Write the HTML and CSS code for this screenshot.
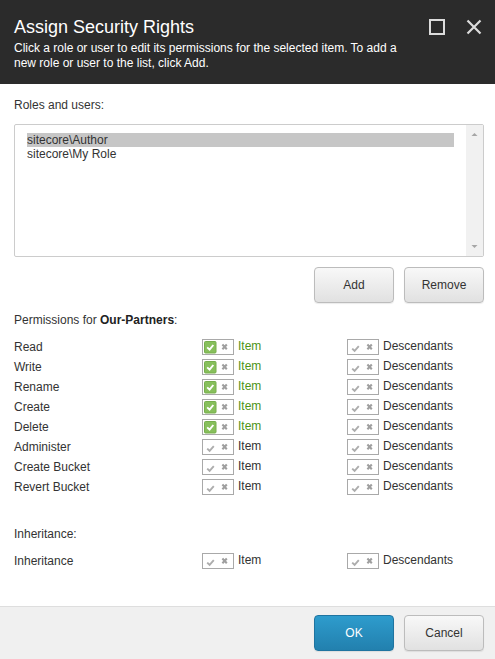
FILE: index.html
```html
<!DOCTYPE html>
<html lang="en">
<head>
<meta charset="utf-8">
<title>Assign Security Rights</title>
<link rel="stylesheet" href="styles.css">
</head>
<body>
<div class="dialog">
  <header class="header">
    <div class="head-text">
      <h1 class="title">Assign Security Rights</h1>
      <p class="subtitle">Click a role or user to edit its permissions for the selected item. To add a new role or user to the list, click Add.</p>
    </div>
    <div class="win-actions">
      <svg class="win-icon" width="16" height="16" viewBox="0 0 16 16"><rect x="1" y="1" width="14" height="14" fill="none" stroke="#dcdcdc" stroke-width="2"/></svg>
      <svg class="win-icon" width="16" height="16" viewBox="0 0 16 16"><path d="M1.5 1.5 L14.5 14.5 M14.5 1.5 L1.5 14.5" stroke="#dcdcdc" stroke-width="2.2" fill="none"/></svg>
    </div>
  </header>

  <main class="content">
    <div class="section-label roles-label">Roles and users:</div>
    <div class="listbox">
      <ul class="list-items">
        <li class="selected">sitecore\Author</li>
        <li>sitecore\My Role</li>
      </ul>
      <div class="scrollbar">
        <svg width="17" height="17" viewBox="0 0 17 17"><path d="M5.5 10 L8.5 7 L11.5 10 Z" fill="#a6a6a6"/></svg>
        <svg width="17" height="17" viewBox="0 0 17 17"><path d="M5.5 7 L8.5 10 L11.5 7 Z" fill="#a6a6a6"/></svg>
      </div>
    </div>
    <div class="list-actions">
      <button class="btn">Add</button>
      <button class="btn">Remove</button>
    </div>

    <div class="section-label perm-label">Permissions for <b>Our-Partners</b>:</div>
    <div class="perm-grid">
      <div class="perm-name">Read</div>
      <div class="cell"><span class="tri tri-on"></span><span class="lbl lbl-on">Item</span></div>
      <div class="cell"><span class="tri"></span><span class="lbl">Descendants</span></div>

      <div class="perm-name">Write</div>
      <div class="cell"><span class="tri tri-on"></span><span class="lbl lbl-on">Item</span></div>
      <div class="cell"><span class="tri"></span><span class="lbl">Descendants</span></div>

      <div class="perm-name">Rename</div>
      <div class="cell"><span class="tri tri-on"></span><span class="lbl lbl-on">Item</span></div>
      <div class="cell"><span class="tri"></span><span class="lbl">Descendants</span></div>

      <div class="perm-name">Create</div>
      <div class="cell"><span class="tri tri-on"></span><span class="lbl lbl-on">Item</span></div>
      <div class="cell"><span class="tri"></span><span class="lbl">Descendants</span></div>

      <div class="perm-name">Delete</div>
      <div class="cell"><span class="tri tri-on"></span><span class="lbl lbl-on">Item</span></div>
      <div class="cell"><span class="tri"></span><span class="lbl">Descendants</span></div>

      <div class="perm-name">Administer</div>
      <div class="cell"><span class="tri"></span><span class="lbl">Item</span></div>
      <div class="cell"><span class="tri"></span><span class="lbl">Descendants</span></div>

      <div class="perm-name">Create Bucket</div>
      <div class="cell"><span class="tri"></span><span class="lbl">Item</span></div>
      <div class="cell"><span class="tri"></span><span class="lbl">Descendants</span></div>

      <div class="perm-name">Revert Bucket</div>
      <div class="cell"><span class="tri"></span><span class="lbl">Item</span></div>
      <div class="cell"><span class="tri"></span><span class="lbl">Descendants</span></div>
    </div>

    <div class="section-label inherit-label">Inheritance:</div>
    <div class="perm-grid">
      <div class="perm-name">Inheritance</div>
      <div class="cell"><span class="tri"></span><span class="lbl">Item</span></div>
      <div class="cell"><span class="tri"></span><span class="lbl">Descendants</span></div>
    </div>
  </main>

  <footer class="footer">
    <button class="btn btn-primary">OK</button>
    <button class="btn">Cancel</button>
  </footer>
</div>
</body>
</html>
```
FILE: styles.css
```css
* { box-sizing: border-box; }

html, body {
  margin: 0;
  padding: 0;
  background: #ffffff;
}

body {
  font-family: "Liberation Sans", Arial, sans-serif;
  font-size: 12px;
  color: #333333;
}

.dialog {
  width: 495px;
  height: 659px;
  display: flex;
  flex-direction: column;
  overflow: hidden;
}

/* Header */
.header {
  height: 84px;
  flex: 0 0 84px;
  background: #2b2b2b;
  color: #ffffff;
  display: flex;
  justify-content: space-between;
  align-items: flex-start;
  padding: 17px 13px 0 14px;
}

.title {
  margin: 0;
  font-size: 18px;
  font-weight: normal;
  line-height: 21px;
}

.subtitle {
  margin: 3px 0 0 0;
  font-size: 12px;
  line-height: 15px;
  max-width: 400px;
}

.win-actions {
  display: flex;
  gap: 21px;
  margin-top: 2px;
}

.win-icon { display: block; }

/* Content */
.content {
  flex: 1 1 auto;
  padding: 0 11px 0 14px;
}

.section-label {
  line-height: 14px;
  color: #333333;
}

.section-label b { color: #222222; }

.roles-label { margin-top: 14px; }

.listbox {
  margin-top: 12px;
  height: 133px;
  border: 1px solid #cccccc;
  border-radius: 2px;
  display: flex;
}

.list-items {
  flex: 1 1 auto;
  list-style: none;
  margin: 0;
  padding: 8px 12px 0 12px;
}

.list-items li {
  line-height: 14px;
  height: 14px;
  color: #333333;
}

.list-items li.selected {
  background: #c6c6c6;
}

.scrollbar {
  width: 17px;
  flex: 0 0 17px;
  background: #f1f1f1;
  display: flex;
  flex-direction: column;
  justify-content: space-between;
  padding: 1px 0;
}

.scrollbar svg { display: block; }

.list-actions {
  margin-top: 10px;
  display: flex;
  justify-content: flex-end;
  gap: 10px;
}

/* Buttons */
.btn {
  width: 80px;
  height: 36px;
  font-family: "Liberation Sans", Arial, sans-serif;
  font-size: 12px;
  color: #333333;
  background: linear-gradient(#f8f8f8, #e1e1e1);
  border: 1px solid #bcbcbc;
  border-radius: 4px;
  padding: 0;
  box-shadow: 0 1px 1px rgba(0,0,0,0.08);
}

.btn-primary {
  color: #ffffff;
  background: linear-gradient(#2e9ccd, #2280ae);
  border-color: #1f74a0;
}

/* Permissions */
.perm-label { margin-top: 10px; }

.perm-grid {
  margin-top: 10px;
  display: grid;
  grid-template-columns: 188px 145px 1fr;
  grid-auto-rows: 20px;
  align-items: center;
}

.perm-name {
  line-height: 14px;
}

.cell {
  display: flex;
  align-items: center;
  gap: 4px;
  height: 20px;
}

.lbl {
  line-height: 14px;
  color: #333333;
  margin-top: -2px;
}

.lbl-on { color: #4d9417; }

.tri {
  display: block;
  width: 32px;
  height: 16px;
  border: 1px solid #a9a9a9;
  background-color: #ffffff;
  background-repeat: no-repeat;
  background-position: 0 0;
  background-image: url("data:image/svg+xml,%3Csvg xmlns='http://www.w3.org/2000/svg' width='30' height='14' viewBox='0 0 30 14'%3E%3Cpath d='M4.2 8.6 L6.6 10.8 L10.8 6.2' fill='none' stroke='%23adadad' stroke-width='1.9'/%3E%3Cpath d='M19.4 4.6 L23.8 9.2 M23.8 4.6 L19.4 9.2' fill='none' stroke='%239f9f9f' stroke-width='2.1'/%3E%3C/svg%3E");
}

.tri-on {
  background-image: url("data:image/svg+xml,%3Csvg xmlns='http://www.w3.org/2000/svg' width='30' height='14' viewBox='0 0 30 14'%3E%3Crect x='1.5' y='1.5' width='11.5' height='11.5' rx='1' fill='%2387bf5c' stroke='%2376ae4b'/%3E%3Cpath d='M4.2 7.4 L6.6 9.7 L10.3 5' fill='none' stroke='%23ffffff' stroke-width='1.9'/%3E%3Cpath d='M19.4 4.6 L23.8 9.2 M23.8 4.6 L19.4 9.2' fill='none' stroke='%239f9f9f' stroke-width='2.1'/%3E%3C/svg%3E");
}

.inherit-label { margin-top: 30px; }

/* Footer */
.footer {
  flex: 0 0 53px;
  height: 53px;
  background: #f0f0f0;
  border-top: 1px solid #dedede;
  display: flex;
  justify-content: flex-end;
  align-items: flex-start;
  gap: 10px;
  padding: 8px 11px 0 0;
}
```
